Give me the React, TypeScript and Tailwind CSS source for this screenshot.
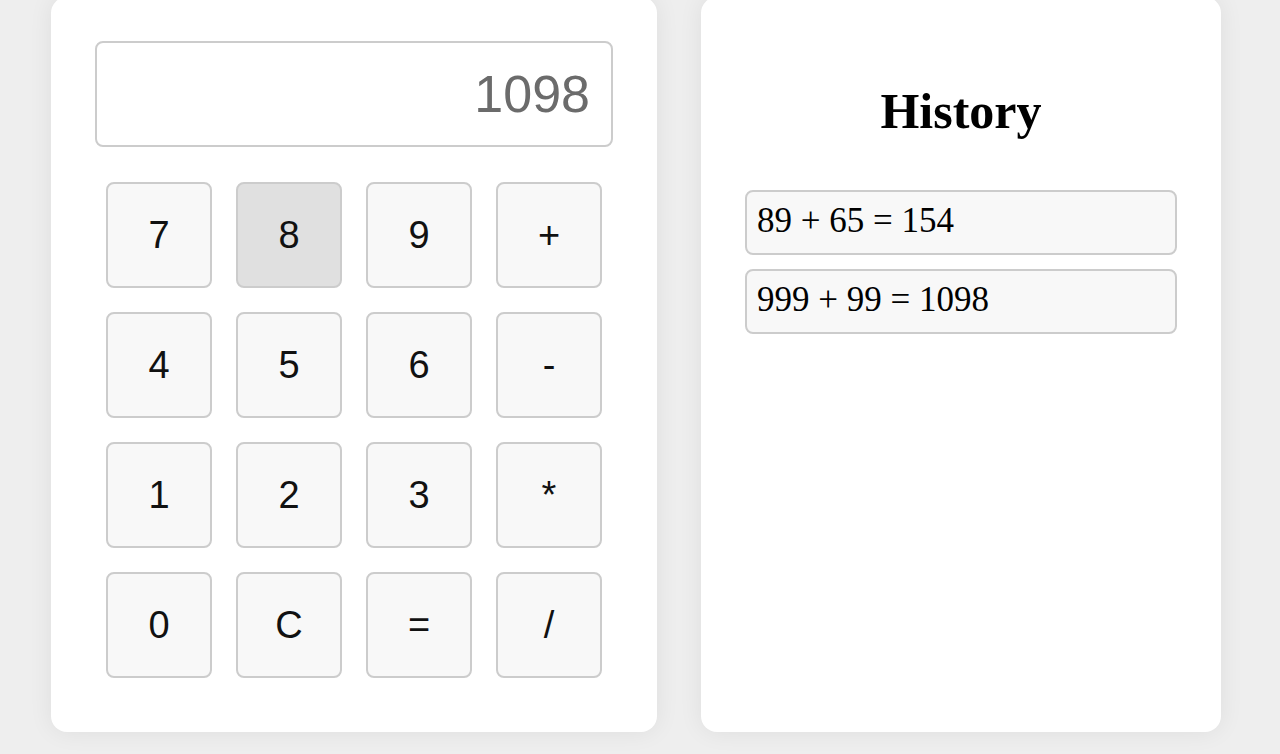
import { useState } from 'react';

const keys = ['7', '8', '9', '+', '4', '5', '6', '-', '1', '2', '3', '*', '0', 'C', '=', '/'];

export default function App() {
    const [display] = useState('1098');
    const [history] = useState<string[]>(['89 + 65 = 154', '999 + 99 = 1098']);

    return (
        <div className="h-[754px] overflow-hidden bg-[#eeeeee]">
            <div className="flex items-stretch gap-[44px] pl-[51px] -mt-[3px]">
                {/* calculator */}
                <div className="w-[606px] rounded-2xl bg-white px-[44px] pt-[44px] pb-[54px] shadow-[0_0_24px_rgba(0,0,0,0.07)]">
                    <div className="flex h-[106px] items-center justify-end rounded-lg border-2 border-[#cccccc] bg-white pr-[21px] font-['Liberation_Sans',Arial,sans-serif] text-[52px] text-[#6b6b6b]">
                        {display}
                    </div>
                    <div className="mx-auto mt-[35px] grid w-[496px] grid-cols-4 gap-6">
                        {keys.map(k => (
                            <button
                                key={k}
                                className={`flex h-[106px] w-[106px] items-center justify-center rounded-lg border-2 border-[#cccccc] font-['Liberation_Sans',Arial,sans-serif] text-[38px] text-[#111111] ${k === '8' ? 'bg-[#e0e0e0]' : 'bg-[#f8f8f8]'}`}
                            >
                                {k}
                            </button>
                        ))}
                    </div>
                </div>

                {/* history */}
                <div className="w-[520px] rounded-2xl bg-white px-[44px] pt-[44px] shadow-[0_0_24px_rgba(0,0,0,0.07)]">
                    <h2 className="mt-[42px] text-center font-['Liberation_Serif','Times_New_Roman',serif] text-[50px] font-bold leading-[57px] text-black">
                        History
                    </h2>
                    <div className="mt-[50px] flex flex-col gap-[14px]">
                        {history.map((h, i) => (
                            <div
                                key={i}
                                className="rounded-lg border-2 border-[#cccccc] bg-[#f8f8f8] pl-[10px] pt-[9px] pb-[13px] font-['Liberation_Serif','Times_New_Roman',serif] text-[35px] leading-[39px] text-black"
                            >
                                {h}
                            </div>
                        ))}
                    </div>
                </div>
            </div>
        </div>
    )
}
